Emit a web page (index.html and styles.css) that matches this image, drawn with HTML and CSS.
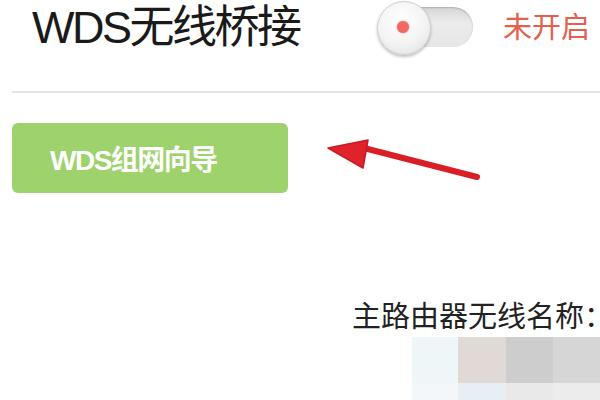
FILE: index.html
```html
<!DOCTYPE html>
<html lang="zh-CN">
<head>
<meta charset="utf-8">
<link rel="stylesheet" href="styles.css">
</head>
<body>
<div class="page">
  <div class="header">
    <h1 class="title">WDS无线桥接</h1>
    <div class="toggle">
      <div class="track"></div>
      <div class="knob"><span class="dot"></span></div>
    </div>
    <span class="status">未开启</span>
  </div>
  <div class="rule"></div>
  <button class="wizard">WDS组网向导</button>
  <div class="label">主路由器无线名称：</div>
  <div class="mosaic">
    <div class="row tall">
      <span class="cell c1"></span><span class="cell c2"></span><span class="cell c3"></span><span class="cell c4"></span>
    </div>
    <div class="row short">
      <span class="cell c5"></span><span class="cell c6"></span><span class="cell c7"></span><span class="cell c8"></span>
    </div>
  </div>
  <svg class="arrow" width="170" height="60" viewBox="0 0 170 60">
    <line x1="30" y1="17" x2="147" y2="47" stroke="#d91e26" stroke-width="6" stroke-linecap="round"/>
    <polygon points="-2,18 38,10 33,38" fill="#e0222b" stroke="#c81a22" stroke-width="1.5" stroke-linejoin="round"/>
  </svg>
</div>
</body>
</html>
```
FILE: styles.css
```css
html, body {
  margin: 0;
  padding: 0;
  background: #ffffff;
}
body {
  width: 600px;
  height: 400px;
  overflow: hidden;
  font-family: "Liberation Sans", "Noto Sans CJK SC", sans-serif;
}
.page {
  position: relative;
  width: 600px;
  height: 400px;
}
.header {
  display: flex;
  align-items: center;
  height: 56px;
  padding-left: 32px;
}
.title {
  margin: 0;
  font-size: 45px;
  font-weight: normal;
  color: #1a1a1a;
  letter-spacing: -2.5px;
  line-height: 56px;
  width: 268px;
  white-space: nowrap;
}
.toggle {
  position: relative;
  flex: none;
  width: 96px;
  height: 56px;
  margin-left: 77px;
}
.track {
  position: absolute;
  left: 2px;
  top: 7px;
  width: 94px;
  height: 40px;
  border-radius: 20px;
  background: linear-gradient(#d6d6d6, #ececec 40%, #e6e6e6);
  box-shadow: inset 0 1px 2px rgba(0,0,0,0.2);
}
.knob {
  position: absolute;
  left: 0;
  top: 1px;
  width: 52px;
  height: 52px;
  border-radius: 50%;
  background: radial-gradient(circle at 45% 35%, #ffffff 0%, #f3f3f3 55%, #dcdcdc 100%);
  border: 1px solid #cfcfcf;
  box-shadow: 0 2px 3px rgba(0,0,0,0.25);
  display: flex;
  align-items: center;
  justify-content: center;
}
.dot {
  width: 12px;
  height: 12px;
  border-radius: 50%;
  background: #ee6a64;
  box-shadow: 0 0 2px #f08a85;
  margin-right: 2px;
  margin-top: -3px;
}
.status {
  margin-left: 30px;
  font-size: 29px;
  color: #e4604e;
  line-height: 56px;
  white-space: nowrap;
}
.rule {
  margin: 35px 0 0 12px;
  height: 2px;
  background: #e4e4e4;
}
.wizard {
  display: block;
  margin: 30px 0 0 12px;
  width: 276px;
  height: 70px;
  border: none;
  border-radius: 6px;
  background: #9dd26c;
  color: #ffffff;
  font-family: "Liberation Sans", "Noto Sans CJK SC", sans-serif;
  font-size: 28px;
  font-weight: bold;
  letter-spacing: -1.5px;
  text-align: left;
  padding: 0 0 0 38px;
}
.label {
  margin: 103px 0 0 352px;
  font-size: 29px;
  line-height: 36px;
  color: #222222;
  white-space: nowrap;
  font-family: "Noto Sans CJK SC", sans-serif;
}
.mosaic {
  margin: 5px 0 0 412px;
}
.row {
  display: flex;
}
.tall { height: 46px; }
.short { height: 20px; }
.cell { display: block; height: 100%; }
.c1, .c5 { width: 46px; }
.c2, .c6 { width: 48px; }
.c3, .c7 { width: 47px; }
.c4, .c8 { width: 47px; }
.c1 { background: #eff6f8; }
.c2 { background: #e1d9d5; }
.c3 { background: #cdcdcd; }
.c4 { background: #d6d6d6; }
.c5 { background: #f4f7f9; }
.c6 { background: #e7eef4; }
.c7 { background: #e9e9e9; }
.c8 { background: #ececec; }
.arrow {
  position: absolute;
  left: 330px;
  top: 130px;
  overflow: visible;
}
```
